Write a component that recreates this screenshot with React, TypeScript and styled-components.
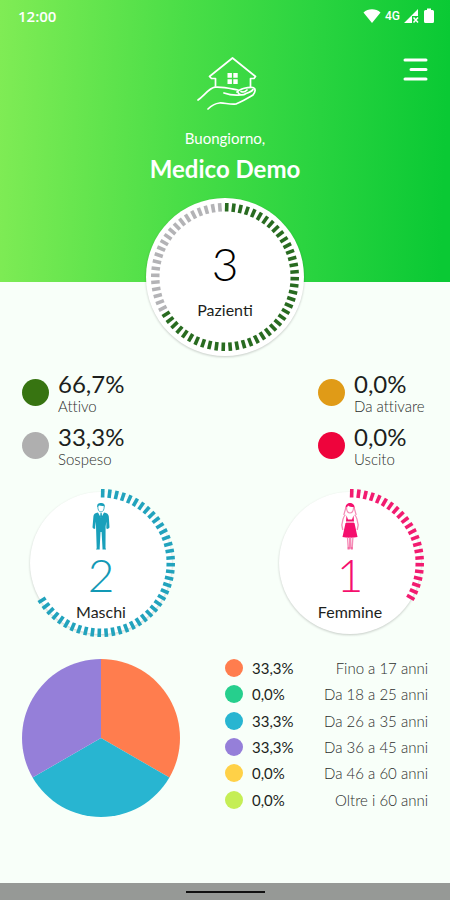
import React from "react";
import styled, { createGlobalStyle } from "styled-components";

const GlobalStyle = createGlobalStyle`
  * {
    box-sizing: border-box;
  }

  body {
    margin: 0;
    font-family: Lato, "Open Sans", sans-serif;
    color: #1d1f1d;
    background-color: #f8fff9;
  }
`;

const Screen = styled.div`
  min-height: 100vh;
  display: flex;
  flex-direction: column;
`;

const Header = styled.header`
  height: 282px;
  background: linear-gradient(92deg, #80ec55 0%, #4ade47 40%, #2bd440 68%, #0ac934 98%);
  color: white;
`;

const StatusBar = styled.div`
  height: 32px;
  padding: 0 15px 0 18px;
  display: flex;
  justify-content: space-between;
  align-items: center;
`;

const Clock = styled.span`
  font-family: "Open Sans", sans-serif;
  font-size: 15px;
  font-weight: 600;
`;

const StatusIcons = styled.div`
  display: flex;
  align-items: center;
  gap: 4px;
`;

const Network = styled.span`
  font-family: Roboto, sans-serif;
  font-size: 12px;
  font-weight: 500;
`;

const Toolbar = styled.div`
  padding: 24px 22px 0;
  display: grid;
  grid-template-columns: 1fr 64px 1fr;
  align-items: start;
`;

const LogoBox = styled.div`
  grid-column: 2;
  height: 56px;
`;

const MenuButton = styled.button`
  justify-self: end;
  padding: 0;
  border: none;
  background: none;
  line-height: 0;
  cursor: pointer;
`;

const Greeting = styled.p`
  margin: 16px 0 0;
  font-size: 15px;
  line-height: 20px;
  text-align: center;
`;

const DoctorName = styled.h1`
  margin: 6px 0 0;
  font-size: 24px;
  line-height: 30px;
  font-weight: 700;
  text-align: center;
`;

const Main = styled.main`
  margin-top: -84px;
  display: flex;
  flex-direction: column;
`;

const GaugeBox = styled.div`
  display: grid;
  justify-items: center;
`;

const GaugeRing = styled.svg`
  grid-area: 1 / 1;
  display: block;
`;

const GaugeFace = styled.circle`
  fill: white;
  filter: drop-shadow(0 1px 1px rgba(0, 0, 0, 0.2));
`;

const GaugeContent = styled.div<{ $top: number }>`
  grid-area: 1 / 1;
  z-index: 1;
  padding-top: ${(p) => p.$top}px;
  display: flex;
  flex-direction: column;
  align-items: center;
`;

const GaugeValue = styled.span<{ $color: string; $large?: boolean }>`
  font-size: 46px;
  font-weight: 300;
  line-height: ${(p) => (p.$large ? 60 : 50)}px;
  color: ${(p) => p.$color};
`;

const GaugeLabel = styled.span<{ $gap: number }>`
  margin-top: ${(p) => p.$gap}px;
  font-size: 16px;
  line-height: 20px;
`;

const Stats = styled.section`
  padding: 14px 22px 0;
  display: flex;
  justify-content: space-between;
`;

const StatColumn = styled.div`
  min-width: 110px;
  display: flex;
  flex-direction: column;
  gap: 9px;
`;

const Stat = styled.div`
  display: flex;
  align-items: center;
  gap: 9px;
`;

const Dot = styled.span<{ $color: string; $size: number }>`
  flex: none;
  width: ${(p) => p.$size}px;
  height: ${(p) => p.$size}px;
  border-radius: 50%;
  background-color: ${(p) => p.$color};
`;

const StatValue = styled.div`
  font-size: 24px;
  line-height: 28px;
`;

const StatLabel = styled.div`
  font-size: 15px;
  font-weight: 300;
  font-variant-ligatures: none;
  line-height: 16px;
  color: #2c2e2c;
`;

const Genders = styled.section`
  padding: 22px 26px 0 27px;
  display: flex;
  justify-content: space-between;
`;

const Ages = styled.section`
  padding: 18px 22px 0;
  display: flex;
  justify-content: space-between;
  align-items: flex-start;
`;

const Pie = styled.svg`
  margin-top: 4px;
`;

const Legend = styled.ul`
  width: 203px;
  height: 158px;
  margin: 0;
  padding: 0;
  list-style: none;
  display: grid;
  grid-auto-rows: 1fr;
`;

const LegendRow = styled.li`
  display: flex;
  align-items: center;
  font-size: 15px;
`;

const LegendValue = styled.span`
  margin-left: 9px;
`;

const LegendLabel = styled.span`
  margin-left: auto;
  font-weight: 300;
  color: #2c2e2c;
`;

const NavBar = styled.footer`
  height: 17px;
  margin-top: auto;
  background-color: #969996;
  display: flex;
  justify-content: center;
  align-items: center;
`;

const NavHandle = styled.div`
  width: 79px;
  height: 2px;
  background-color: #111;
`;

const TICKS = 64;

interface Arc {
  from: number;
  to: number;
  color: string;
}

interface GaugeProps {
  size: number;
  face: number;
  arcs: Arc[];
  children: React.ReactNode;
  top: number;
}

const Gauge = ({ size, face, arcs, children, top }: GaugeProps) => {
  const c = size / 2;
  const ticks = Array.from({ length: TICKS }, (_, i) => i);
  return (
    <GaugeBox>
      <GaugeRing width={size} height={size} viewBox={`0 0 ${size} ${size}`} overflow="visible">
        <GaugeFace cx={c} cy={c} r={face} />
        {ticks.map((i) => {
          const arc = arcs.find((a) => i / TICKS >= a.from && i / TICKS < a.to);
          if (!arc) return null;
          return (
            <line
              key={i}
              x1={c}
              x2={c}
              y1={c - 74}
              y2={c - 65.5}
              stroke={arc.color}
              strokeWidth="3.6"
              transform={`rotate(${((i + 0.25) * 360) / TICKS} ${c} ${c})`}
            />
          );
        })}
      </GaugeRing>
      <GaugeContent $top={top}>{children}</GaugeContent>
    </GaugeBox>
  );
};

const Logo = () => (
  <svg width="64" height="56" viewBox="0 0 64 56" fill="none" stroke="white" strokeWidth="1.7" strokeLinejoin="round" strokeLinecap="round">
    <path d="M22.5 30V22.5H18.5L16.5 20.5L39.5 2L62.5 20.5L61 22.5H57.5V31" />
    <path d="M34.5 17h4.4v4.8h-4.4zM40.3 17h4.4v4.8h-4.4zM34.5 23.2h4.4V28h-4.4zM40.3 23.2h4.4V28h-4.4z" fill="white" stroke="none" />
    <path d="M5 44C11 40 16 32 22 31.2C30 30.5 37 32.500 45 34" />
    <path d="M31 37C36 38.800 42 39.500 47 39" />
    <path d="M44 36C47 32.500 55 31 60 31.500C63.500 32.500 62 36.500 60 39C54 43 48 45.500 43 48C37 49 31 46.500 26.500 47C22 47.500 18 50 15 53" />
    <path d="M45 36.500C46 39.500 50 39.500 53 37.500C56 36.500 59 35.500 60 33.500M48 35.500C50 36.500 52 36 54 34" />
  </svg>
);

const Man = () => (
  <svg width="18" height="48" viewBox="0 0 18 48" fill="#19a0bb">
    <path d="M5.200 5C5 1.800 6.500 1 9 1s4.200 1 3.800 4.200L12 4.200 7 3.600 6 5z" />
    <path d="M5.800 4.500C5.800 8 7.200 10 9 10s3.200-2 3.200-5.500" fill="none" stroke="#19a0bb" strokeWidth="0.8" />
    <path d="M6 10.500L9 16l3-5.500c3 .5 4.500 1.500 4.800 4L17.500 25.500l-1.600 1.500-1.600-.5.100-7-.8 5L13.500 46h-3L9.600 30H8.500L7.700 46h-3L4 24.500l-.8-5v7L2 27 .5 25.500l.9-11C1.500 12 3 11 6 10.500z" />
    <path d="M8.500 11h1.200l.4 4L9 17l-1-2z" />
    <path d="M4.800 46h2.900v1.500H4zM10.500 46h3l.6 1.500h-3.600z" />
  </svg>
);

const Woman = () => (
  <svg width="18" height="48" viewBox="0 0 18 48" fill="#f50f6d">
    <path d="M4.600 8C4 3 6 1 9 1s5.200 2 4.600 7l-1-3C10.500 5 8 4.500 7 3.500L5.800 6z" />
    <path d="M5.500 5C5.500 9 7 11 9 11s3.500-2 3.500-6M4.500 7L2.800 13M13.500 7l1.700 6" fill="none" stroke="#f58bb6" strokeWidth="1.200" />
    <path d="M5.500 13.500L7 17.500h4l1.500-4 .5 6H5z" />
    <path d="M4.500 21h9l3 14c-4 1-11 1-15 0z" />
    <path d="M4.500 13C2 14 2 18 .8 23l1 5M13.500 13c2.500 1 2.500 5 3.700 10l-1 5M5 20h8M6.500 35.500l.7 10.500h1.300l.2-10.500M9.700 35.500l.2 10.500h1.300l.7-10.500" fill="none" stroke="#f58bb6" strokeWidth="1.300" />
    <path d="M6.800 45h1.900v2.500H6.500zM9.700 45h1.900l.3 2.500H9.700z" fill="#f46ba2" />
  </svg>
);

const ages = [
  { color: "#ff7d4e", value: "33,3%", label: "Fino a 17 anni" },
  { color: "#26cf8d", value: "0,0%", label: "Da 18 a 25 anni" },
  { color: "#28b5d1", value: "33,3%", label: "Da 26 a 35 anni" },
  { color: "#957fd9", value: "33,3%", label: "Da 36 a 45 anni" },
  { color: "#ffd147", value: "0,0%", label: "Da 46 a 60 anni" },
  { color: "#c5ee55", value: "0,0%", label: "Oltre i 60 anni" },
];

const stats = [
  [
    { color: "#377411", value: "66,7%", label: "Attivo" },
    { color: "#afafaf", value: "33,3%", label: "Sospeso" },
  ],
  [
    { color: "#e09b17", value: "0,0%", label: "Da attivare" },
    { color: "#ee043c", value: "0,0%", label: "Uscito" },
  ],
];

const App = () => {
  return (
    <>
      <GlobalStyle />
      <Screen>
        <Header>
          <StatusBar>
            <Clock>12:00</Clock>
            <StatusIcons>
              <svg width="18" height="16" viewBox="0 0 18 16" fill="white">
                <path d="M9 15L.5 4.500C5 .3 13 .3 17.500 4.500z" />
              </svg>
              <Network>4G</Network>
              <svg width="15" height="16" viewBox="0 0 15 16" fill="white">
                <path d="M14 1v7H8v7H0z" />
                <path d="M9.500 9.500l4.500 5M14 9.500l-4.500 5" stroke="white" strokeWidth="1.500" />
              </svg>
              <svg width="12" height="16" viewBox="0 0 12 16" fill="white">
                <path d="M4 .5h4V2h1.500Q11 2 11 3.500v10Q11 15 9.500 15h-7Q1 15 1 13.500v-10Q1 2 2.500 2H4z" />
              </svg>
            </StatusIcons>
          </StatusBar>
          <Toolbar>
            <LogoBox>
              <Logo />
            </LogoBox>
            <MenuButton aria-label="Menu">
              <svg width="26" height="28" viewBox="0 0 26 28" stroke="white" strokeWidth="3" strokeLinecap="round">
                <path d="M3 4h21M9 13.500h15M3 23h21" />
              </svg>
            </MenuButton>
          </Toolbar>
          <Greeting>Buongiorno,</Greeting>
          <DoctorName>Medico Demo</DoctorName>
        </Header>
        <Main>
          <Gauge
            size={158}
            face={79}
            top={36}
            arcs={[
              { from: 0, to: 2 / 3, color: "#286b20" },
              { from: 2 / 3, to: 1, color: "#b3b3b6" },
            ]}
          >
            <GaugeValue $color="#000" $large>
              3
            </GaugeValue>
            <GaugeLabel $gap={6}>Pazienti</GaugeLabel>
          </Gauge>
          <Stats>
            {stats.map((column, i) => (
              <StatColumn key={i}>
                {column.map((s) => (
                  <Stat key={s.label}>
                    <Dot $color={s.color} $size={27} />
                    <div>
                      <StatValue>{s.value}</StatValue>
                      <StatLabel>{s.label}</StatLabel>
                    </div>
                  </Stat>
                ))}
              </StatColumn>
            ))}
          </Stats>
          <Genders>
            <Gauge size={148} face={71} top={13} arcs={[{ from: 0, to: 2 / 3, color: "#22a3bd" }]}>
              <Man />
              <GaugeValue $color="#1299b5">2</GaugeValue>
              <GaugeLabel $gap={2}>Maschi</GaugeLabel>
            </Gauge>
            <Gauge size={148} face={71} top={13} arcs={[{ from: 0, to: 1 / 3, color: "#f21b70" }]}>
              <Woman />
              <GaugeValue $color="#f50f6d">1</GaugeValue>
              <GaugeLabel $gap={2}>Femmine</GaugeLabel>
            </Gauge>
          </Genders>
          <Ages>
            <Pie width="158" height="158" viewBox="-79 -79 158 158">
              <path d="M0 0V-79A79 79 0 0 1 68.400 39.500z" fill="#ff7d4e" />
              <path d="M0 0L68.400 39.500A79 79 0 0 1 -68.400 39.500z" fill="#28b5d1" />
              <path d="M0 0L-68.400 39.500A79 79 0 0 1 0 -79z" fill="#957fd9" />
            </Pie>
            <Legend>
              {ages.map((a) => (
                <LegendRow key={a.label}>
                  <Dot $color={a.color} $size={18} />
                  <LegendValue>{a.value}</LegendValue>
                  <LegendLabel>{a.label}</LegendLabel>
                </LegendRow>
              ))}
            </Legend>
          </Ages>
        </Main>
        <NavBar>
          <NavHandle />
        </NavBar>
      </Screen>
    </>
  );
};

export default App;
